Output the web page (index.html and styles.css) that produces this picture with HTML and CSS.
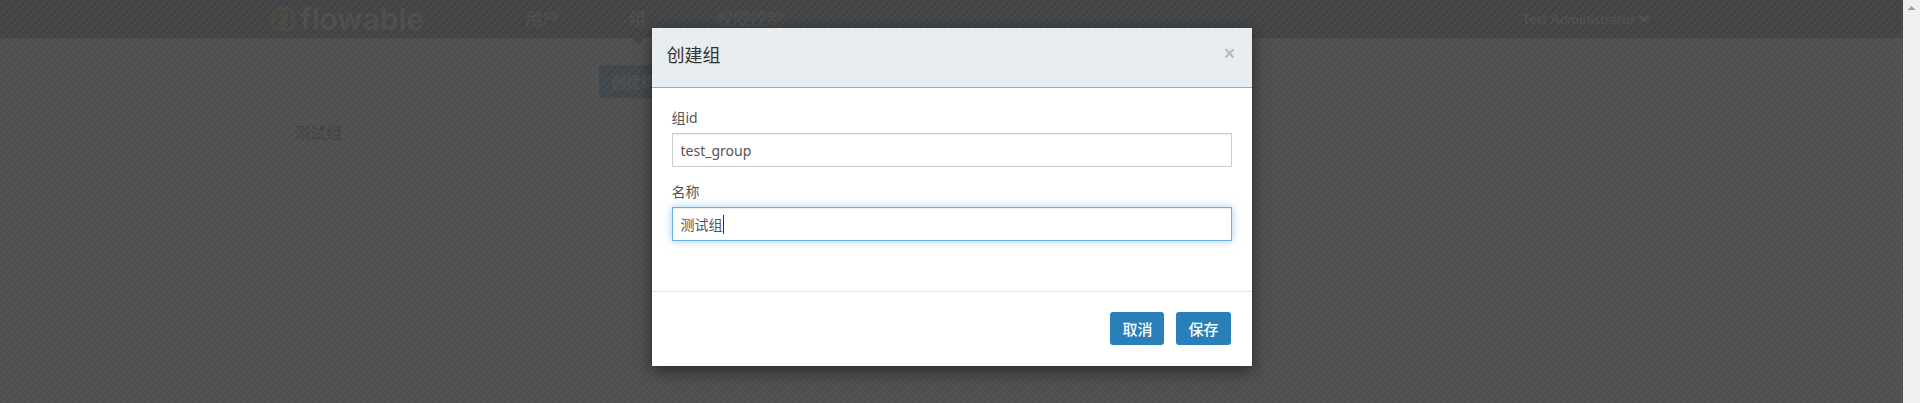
FILE: index.html
```html
<!DOCTYPE html>
<html lang="zh-CN">
<head>
    <meta charset="utf-8">
    <title>Flowable</title>
    <link rel="stylesheet" href="styles.css">
</head>
<body>
<div class="app">
    <header class="navbar">
        <div class="container">
            <a class="brand" href="#">
                <svg width="26" height="26" viewBox="0 0 26 26" aria-hidden="true">
                    <g fill="none" stroke="#9aae3c" stroke-width="4">
                        <path d="M9 3H18Q23 3 23 8V18Q23 23 18 23H8Q3 23 3 18V10"/>
                        <path d="M9 9H16V13L9 19M3 9L9 3M14 19H18"/>
                    </g>
                </svg>
                <span>flowable</span>
            </a>
            <nav class="main-nav">
                <a href="#">用户</a>
                <a href="#" class="active">组</a>
                <a href="#">权限控制</a>
            </nav>
            <button class="account">
                Test Administrator
                <svg width="11" height="8" viewBox="0 0 11 8" aria-hidden="true">
                    <path fill="currentColor" d="M2 0L5.500 3L9 0L11 2.500L5.500 8L0 2.500Z"/>
                </svg>
            </button>
        </div>
    </header>
    <main class="container content">
        <aside class="groups">
            <a href="#">测试组</a>
        </aside>
        <section class="detail">
            <button class="btn">创建组</button>
        </section>
    </main>

    <div class="backdrop">
        <form class="modal" role="dialog" aria-labelledby="modalTitle">
            <div class="modal-header">
                <h2 id="modalTitle">创建组</h2>
                <button type="button" class="close" aria-label="Close">×</button>
            </div>
            <div class="modal-body">
                <div class="form-group">
                    <label for="groupId">组id</label>
                    <input type="text" id="groupId" value="test_group">
                </div>
                <div class="form-group">
                    <label for="groupName">名称</label>
                    <div class="field">
                        <input type="text" id="groupName" class="focused" value="测试组">
                        <span class="caret"></span>
                    </div>
                </div>
            </div>
            <div class="modal-footer">
                <button type="button" class="btn">取消</button>
                <button type="button" class="btn">保存</button>
            </div>
        </form>
    </div>
</div>
<div class="scrollbar">
    <svg width="7" height="4" viewBox="0 0 7 4" shape-rendering="crispEdges" aria-hidden="true">
        <path fill="#a3a3a3" d="M3 0H4V1H5V2H6V3H7V4H0V3H1V2H2V1H3Z"/>
    </svg>
</div>
</body>
</html>
```
FILE: styles.css
```css
:root {
    --nav-bg: #435467;
    --primary: #2980b9;
    --header-bg: #e8edf1;
    --text: #555;
    --border: #ccc;
    --focus: #66afe9;
}

* {
    box-sizing: border-box;
}

body {
    margin: 0;
    display: flex;
    min-height: 100vh;
    font-family: "Noto Sans", "Noto Sans CJK SC", sans-serif;
    font-size: 14px;
    line-height: 20px;
    color: var(--text);
}

a {
    color: inherit;
    text-decoration: none;
}

button {
    font: inherit;
    border: 0;
    cursor: pointer;
}

.app {
    flex: 1;
    position: relative;
    background: #fff;
}

.container {
    max-width: 1397px;
    margin: 0 auto;
    padding-left: 17px;
}

/* navigation */
.navbar {
    background: var(--nav-bg);
    color: #fff;
}

.navbar .container {
    display: flex;
    align-items: center;
    height: 38px;
}

.brand {
    display: flex;
    align-items: center;
    gap: 4px;
    width: 220px;
    font-family: Inter, sans-serif;
    font-size: 30px;
    font-weight: 600;
    line-height: 38px;
    color: #d5dadd;
}

.main-nav {
    display: flex;
    flex: 1;
    font-size: 17px;
    line-height: 38px;
}

.main-nav a {
    position: relative;
    padding: 0 35px;
    opacity: 0.8;
}

.main-nav .active {
    opacity: 1;
}

.main-nav .active::after {
    content: "";
    position: absolute;
    top: 100%;
    left: 50%;
    margin-left: -6px;
    border: 6px solid transparent;
    border-top-color: var(--nav-bg);
    border-bottom: 0;
}

.account {
    display: flex;
    align-items: center;
    gap: 4px;
    padding: 0;
    background: none;
    color: #fff;
    font-family: Lato, sans-serif;
    font-size: 14px;
    font-weight: 500;
}

/* page content */
.content {
    display: flex;
    padding-top: 27px;
}

.groups {
    width: 329px;
    padding: 58px 24px 0;
    font-size: 16px;
    color: #222;
}

.btn {
    padding: 6px 12px;
    height: 33px;
    border-radius: 3px;
    background: var(--primary);
    color: #fff;
    font-size: 15px;
    font-weight: 500;
}

/* woven dark cover behind the dialog */
.backdrop {
    position: absolute;
    inset: 0;
    display: flex;
    justify-content: center;
    align-items: flex-start;
    padding-top: 28px;
    background:
        linear-gradient(45deg, rgba(0, 0, 0, 0.04) 25%, transparent 25% 50%, rgba(0, 0, 0, 0.04) 50% 75%, transparent 75%) 0 0 / 6px 6px,
        linear-gradient(-45deg, rgba(255, 255, 255, 0.02) 25%, transparent 25% 50%, rgba(255, 255, 255, 0.02) 50% 75%, transparent 75%) 0 0 / 8px 8px,
        rgba(68, 68, 68, 0.93);
}

.modal {
    width: 600px;
    background: #fff;
    box-shadow: 0 5px 15px rgba(0, 0, 0, 0.5);
}

.modal-header {
    display: flex;
    justify-content: space-between;
    align-items: center;
    height: 60px;
    padding: 0 16px 6px 15px;
    background: var(--header-bg);
    border-bottom: 1px solid #9fa9b8;
}

.modal-header h2 {
    margin: 0;
    font-size: 18px;
    font-weight: 400;
    color: #333;
}

.close {
    padding: 0 0 4px;
    background: none;
    font-size: 21px;
    font-weight: 600;
    color: #b5b9bc;
}

.modal-body {
    padding: 20px 20px 35px;
}

.form-group {
    margin-bottom: 15px;
}

label {
    display: block;
    margin-bottom: 5px;
}

.field {
    position: relative;
}

input {
    display: block;
    width: 100%;
    height: 34px;
    padding: 6px 8px;
    border: 1px solid var(--border);
    box-shadow: inset 0 1px 1px rgba(0, 0, 0, 0.075);
    font: inherit;
    color: var(--text);
}

.focused {
    border-color: var(--focus);
    box-shadow: inset 0 1px 1px rgba(0, 0, 0, 0.075), 0 0 8px rgba(102, 175, 233, 0.6);
}

.caret {
    position: absolute;
    top: 8px;
    left: 51px;
    width: 1px;
    height: 19px;
    background: #333;
}

.modal-footer {
    display: flex;
    justify-content: flex-end;
    gap: 12px;
    padding: 20px 21px 21px;
    border-top: 1px solid #e5e5e5;
}

.scrollbar {
    width: 17px;
    padding: 5px;
    line-height: 0;
    background: #f0f0f0;
}
```
